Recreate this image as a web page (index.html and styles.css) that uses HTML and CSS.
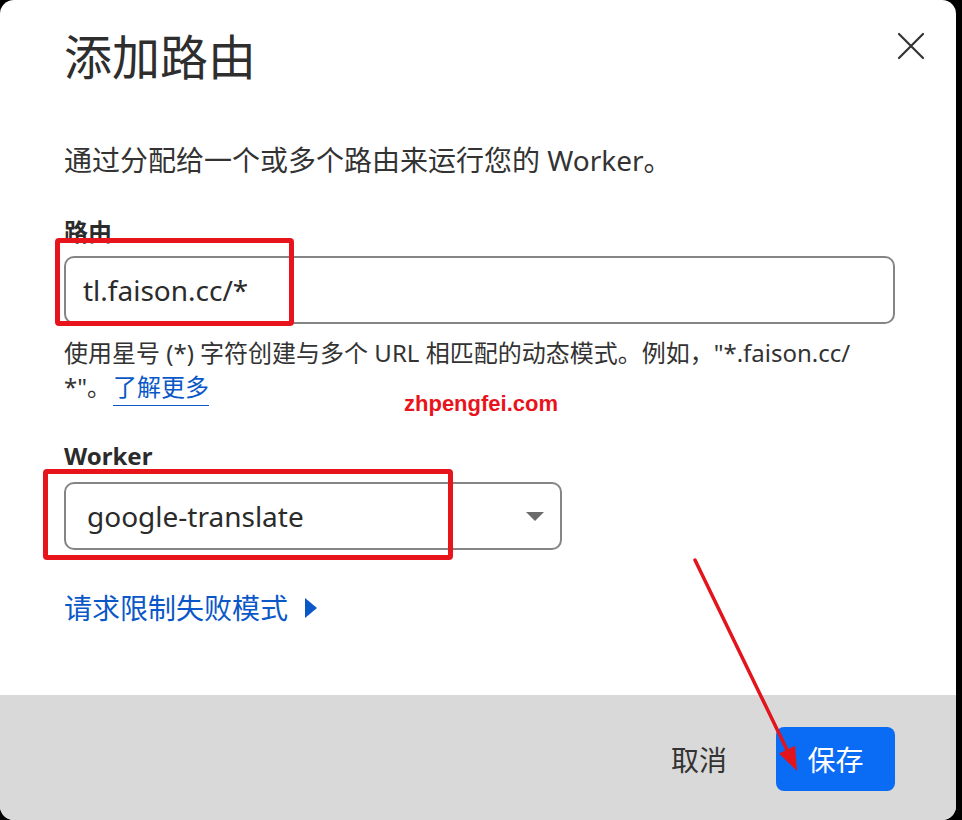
FILE: index.html
```html
<!DOCTYPE html>
<html lang="zh-CN">
<head>
<meta charset="utf-8">
<title>添加路由</title>
<link rel="stylesheet" href="styles.css">
</head>
<body>
<div class="dialog">
  <div class="content">
    <div class="header">
      <h1 class="title">添加路由</h1>
      <button class="close" aria-label="关闭">
        <svg width="28" height="28" viewBox="0 0 28 28"><path d="M2 2 L26 26 M26 2 L2 26" stroke="#333" stroke-width="2.2" fill="none" stroke-linecap="round"/></svg>
      </button>
    </div>
    <p class="desc">通过分配给一个或多个路由来运行您的 Worker。</p>
    <label class="label">路由</label>
    <div class="field">tl.faison.cc/*</div>
    <p class="help">使用星号 (*) 字符创建与多个 URL 相匹配的动态模式。例如，"*.faison.cc/<wbr>*"。<a class="learn" href="#">了解更多</a></p>
    <label class="label label-worker">Worker</label>
    <div class="field select">
      <span>google-translate</span>
      <svg class="caret" width="18" height="9" viewBox="0 0 18 9"><path d="M0 0 H18 L9 9 Z" fill="#6b6b6b"/></svg>
    </div>
    <a class="more" href="#">请求限制失败模式
      <svg class="tri" width="14" height="22" viewBox="0 0 14 22"><path d="M1 1 L13 11 L1 21 Z" fill="#0a57c7"/></svg>
    </a>
  </div>
  <div class="footer">
    <button class="btn cancel">取消</button>
    <button class="btn save">保存</button>
  </div>

  <div class="mark mark-route"></div>
  <div class="mark mark-worker"></div>
  <div class="watermark">zhpengfei.com</div>
  <svg class="arrow" width="956" height="820" viewBox="0 0 956 820">
    <path d="M695 560 L789 754" stroke="#e3141b" stroke-width="3.5" fill="none" stroke-linecap="round"/>
    <path d="M797 771 L795 745.7 L779 753.5 Z" fill="#e3141b"/>
  </svg>
</div>
</body>
</html>
```
FILE: styles.css
```css
* { box-sizing: border-box; }
html, body { margin: 0; padding: 0; }
body {
  background: #000;
  width: 962px;
  height: 820px;
  overflow: hidden;
  font-family: "Noto Sans", "Noto Sans CJK SC", sans-serif;
  color: #333;
}
.dialog {
  position: relative;
  width: 956px;
  height: 820px;
  background: #fff;
  border-radius: 14px;
  overflow: hidden;
  display: flex;
  flex-direction: column;
}
.content {
  flex: 1;
  padding: 26px 61px 0 64px;
  display: flex;
  flex-direction: column;
  align-items: flex-start;
}
.header {
  width: 100%;
  display: flex;
  justify-content: space-between;
  align-items: flex-start;
}
.title {
  margin: 0;
  font-size: 48px;
  line-height: 62px;
  font-weight: 400;
  color: #2e2e2e;
}
.close {
  margin: 6px -30px 0 0;
  padding: 0;
  border: 0;
  background: none;
  width: 28px;
  height: 28px;
}
.close svg { display: block; }
.desc {
  margin: 52px 0 0;
  font-size: 28px;
  line-height: 40px;
}
.label {
  margin-top: 36px;
  font-size: 24px;
  line-height: 32px;
  font-weight: 700;
  color: #2b2b2b;
}
.label-worker { margin-top: 36px; }
.field {
  margin-top: 8px;
  width: 100%;
  height: 68px;
  border: 2px solid #858585;
  border-radius: 10px;
  padding: 0 17px;
  display: flex;
  align-items: center;
  font-size: 28px;
  color: #2b2b2b;
}
.select {
  width: 498px;
  padding: 0 16px 0 21px;
  justify-content: space-between;
}
.label-worker + .select { margin-top: 10px; }
.caret { display: block; margin-right: 0; }
.help {
  margin: 12px 0 0;
  font-size: 24px;
  line-height: 34px;
  width: 100%;
}
.learn {
  color: #0a57c7;
  text-decoration: none;
  border-bottom: 1.5px solid #0a57c7;
  padding-bottom: 2px;
  margin-left: 2px;
}
.more {
  margin-top: 38px;
  font-size: 28px;
  line-height: 40px;
  color: #0a57c7;
  text-decoration: none;
  display: flex;
  align-items: center;
  gap: 16px;
}
.tri { display: block; }
.footer {
  height: 125px;
  background: #d9d9d9;
  display: flex;
  justify-content: flex-end;
  align-items: flex-start;
  padding: 32px 61px 0 0;
  gap: 25px;
}
.btn {
  font-family: inherit;
  font-size: 28px;
  height: 64px;
  border: 0;
  border-radius: 8px;
  cursor: pointer;
}
.cancel {
  background: none;
  color: #333;
  padding: 0 24px;
}
.save {
  width: 119px;
  background: #0a6cf5;
  color: #fff;
}
.mark {
  position: absolute;
  border: 5px solid #e8141c;
  border-radius: 4px;
}
.mark-route { left: 55px; top: 238px; width: 239px; height: 88px; }
.mark-worker { left: 43px; top: 469px; width: 410px; height: 91px; }
.watermark {
  position: absolute;
  left: 404px;
  top: 391px;
  font-family: "Liberation Sans", sans-serif;
  font-weight: 700;
  font-size: 22px;
  color: #e8141c;
}
.arrow {
  position: absolute;
  left: 0;
  top: 0;
  pointer-events: none;
}
```
